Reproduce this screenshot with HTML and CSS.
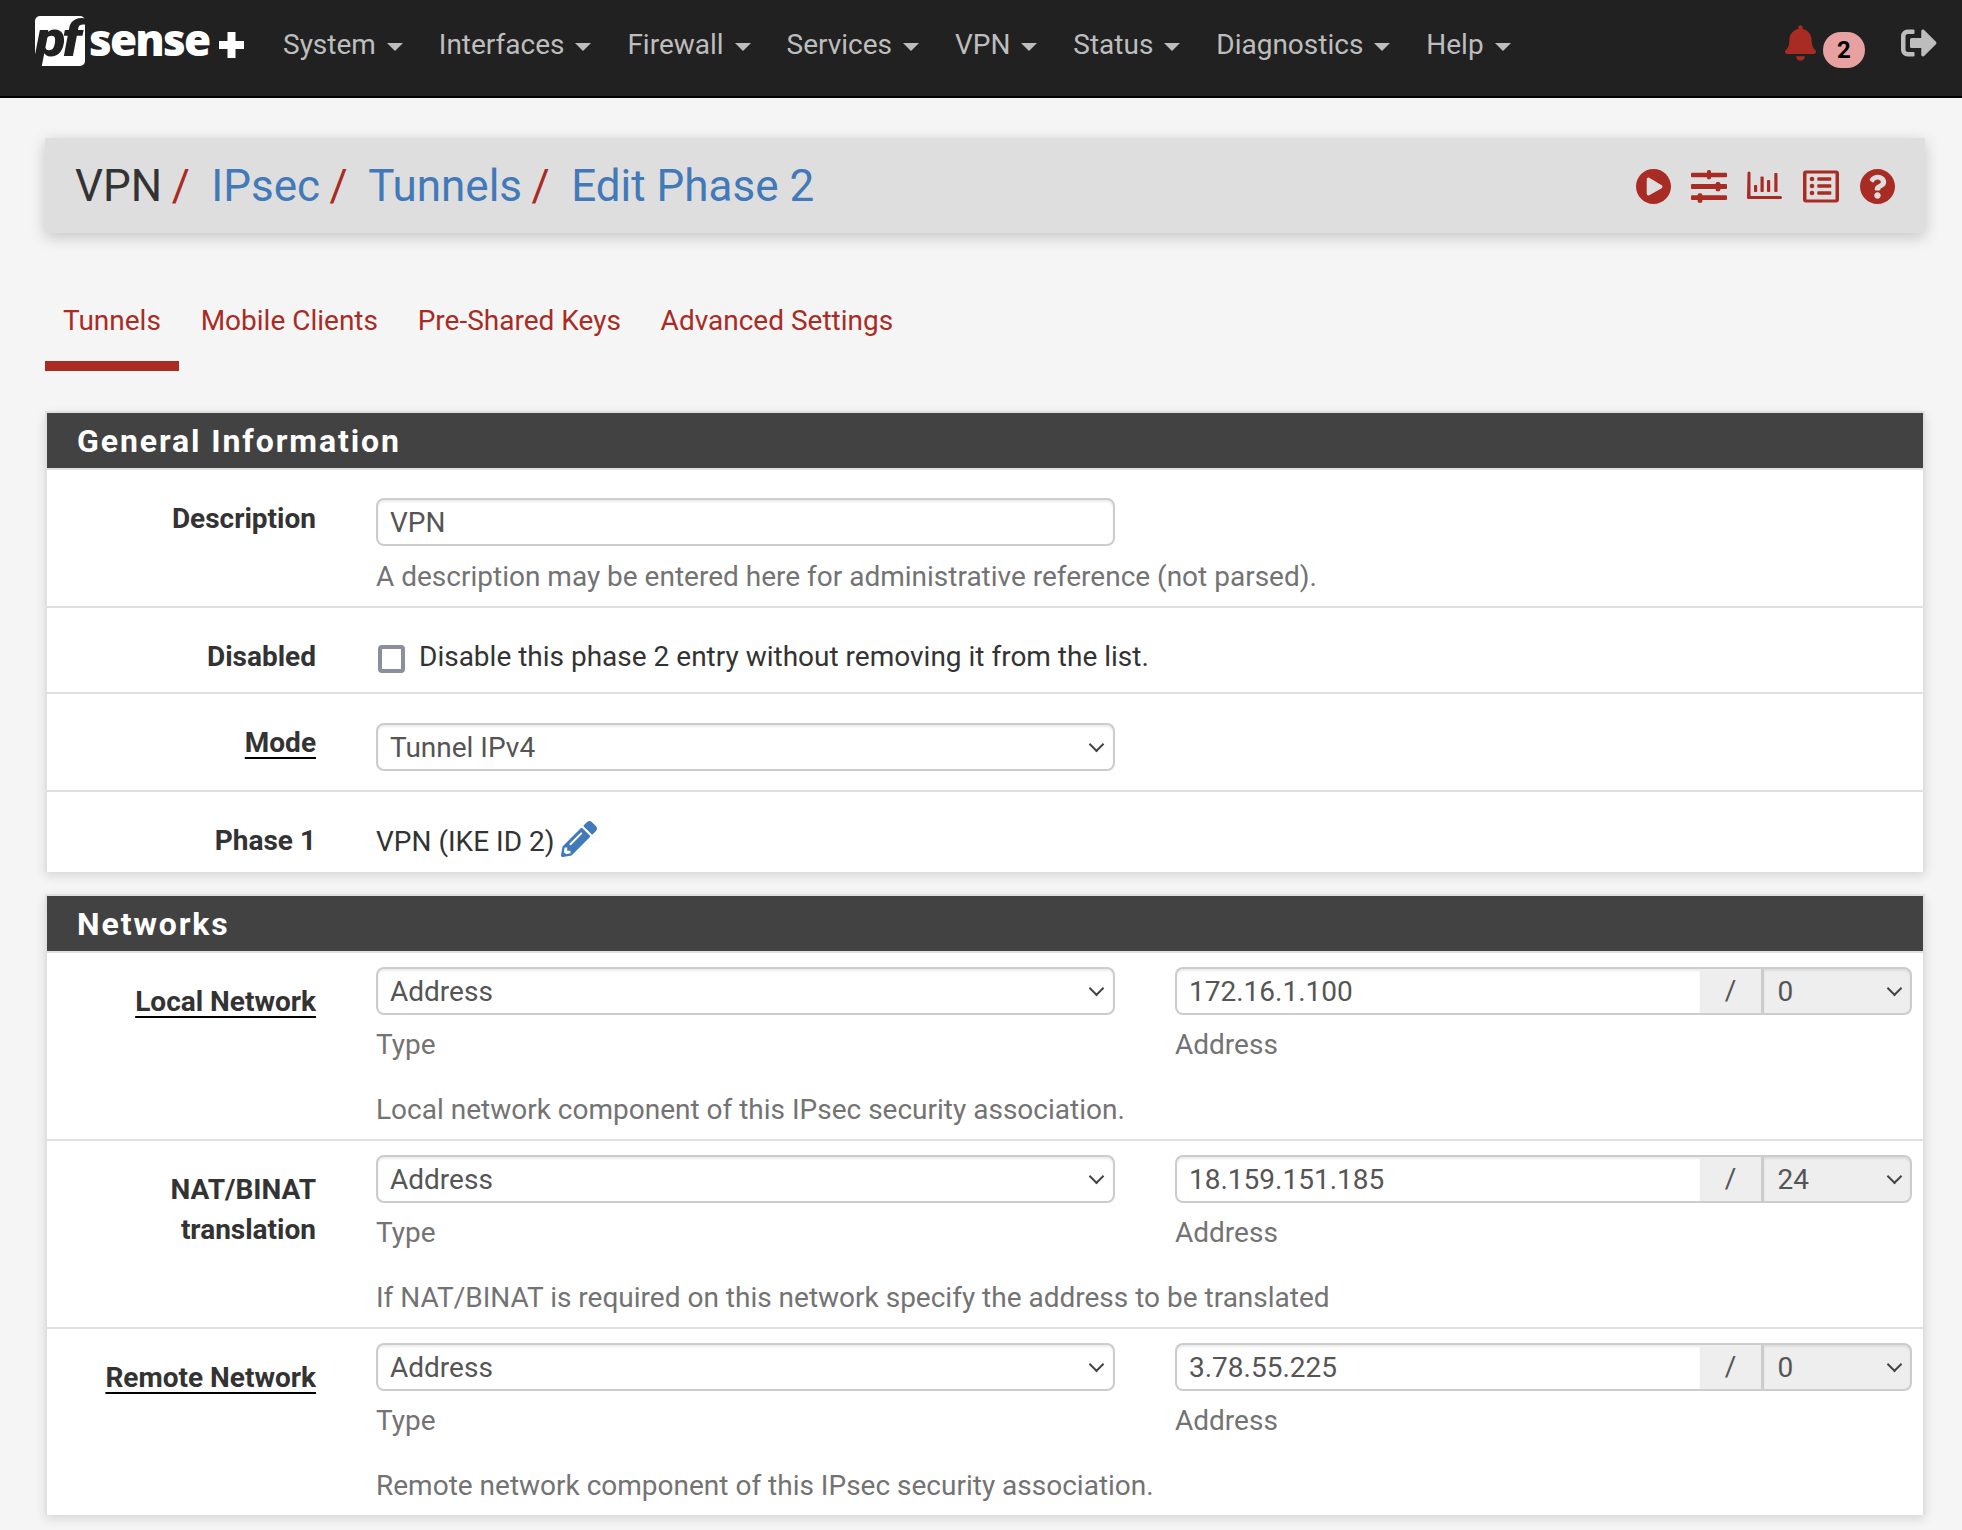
FILE: index.html
```html
<!DOCTYPE html>
<html lang="en">
<head>
<meta charset="utf-8">
<title>VPN / IPsec / Tunnels / Edit Phase 2</title>
<link rel="stylesheet" href="styles.css">
</head>
<body>
<nav class="navbar">
  <a class="logo" href="#" aria-label="pfSense+">
    <span class="logo-box"><span class="logo-pf">pf</span></span>
    <span class="logo-sense">sense</span>
    <svg class="logo-plus" viewBox="0 0 25 26" aria-hidden="true"><path d="M8.500 0h8v9h8.500v8h-8.500v9h-8v-9h-8.500v-8h8.500z"/></svg>
  </a>
  <ul class="menu">
    <li class="menu-item">System</li>
    <li class="menu-item">Interfaces</li>
    <li class="menu-item">Firewall</li>
    <li class="menu-item">Services</li>
    <li class="menu-item">VPN</li>
    <li class="menu-item">Status</li>
    <li class="menu-item">Diagnostics</li>
    <li class="menu-item">Help</li>
  </ul>
  <div class="nav-right">
    <svg class="bell" viewBox="0 0 448 512" aria-hidden="true"><path d="M224 512c35.320 0 63.970-28.650 63.970-64H160.030c0 35.350 28.650 64 63.970 64zm215.390-149.710c-19.320-20.760-55.470-51.990-55.470-154.290 0-77.700-54.480-139.900-127.940-155.160V32c0-17.670-14.320-32-31.980-32s-31.980 14.330-31.980 32v20.840C118.560 68.100 64.080 130.300 64.080 208c0 102.300-36.150 133.530-55.470 154.290-6 6.450-8.660 14.160-8.610 21.710.11 16.400 12.980 32 32.100 32h383.800c19.120 0 32-15.600 32.100-32 .05-7.550-2.610-15.270-8.610-21.710z"/></svg>
    <span class="badge">2</span>
    <svg class="logout" viewBox="0 0 512 512" aria-hidden="true"><path d="M497 273L329 441c-15 15-41 4.500-41-17v-96H152c-13.300 0-24-10.700-24-24v-96c0-13.300 10.700-24 24-24h136V88c0-21.400 25.900-32 41-17l168 168c9.300 9.400 9.300 24.600 0 34zM192 436v-40c0-6.600-5.400-12-12-12H96c-17.700 0-32-14.300-32-32V160c0-17.700 14.300-32 32-32h84c6.600 0 12-5.400 12-12V76c0-6.600-5.400-12-12-12H96c-53 0-96 43-96 96v192c0 53 43 96 96 96h84c6.600 0 12-5.400 12-12z"/></svg>
  </div>
</nav>

<main class="page">
  <header class="crumbs">
    <h1 class="crumb-list">
      <span>VPN</span><span class="sep">/</span>
      <a href="#">IPsec</a><span class="sep">/</span>
      <a href="#">Tunnels</a><span class="sep">/</span>
      <a href="#">Edit Phase 2</a>
    </h1>
    <div class="crumb-icons">
      <svg class="icon-35" viewBox="8 8 496 496" aria-hidden="true"><path d="M256 8C119 8 8 119 8 256s111 248 248 248 248-111 248-248S393 8 256 8zm115.700 272l-176 101c-15.800 8.800-35.700-2.500-35.700-21V152c0-18.400 19.800-29.800 35.700-21l176 107c16.400 9.200 16.400 32.900 0 42z"/></svg>
      <svg class="icon-36" viewBox="0 0 36 33" aria-hidden="true"><rect x="0" y="2.700" width="36" height="4.600" rx="1"/><rect x="0" y="14" width="36" height="5" rx="1"/><rect x="0" y="25.300" width="36" height="4.700" rx="1"/><rect x="16" y="0" width="4" height="9.300" rx="1.500"/><rect x="24.700" y="12" width="4.600" height="9.300" rx="1.500"/><rect x="6.700" y="23.300" width="4.600" height="9.400" rx="1.500"/></svg>
      <svg class="icon-36" viewBox="0 0 36 33" aria-hidden="true"><path d="M1.500 3a1.500 1.500 0 0 1 3 0v23h30a1.500 1.500 0 0 1 0 3H2a1 1 0 0 1-1-1z" transform="translate(-1 0)"/><rect x="7" y="15" width="3.200" height="7" rx=".8"/><rect x="13.500" y="6.500" width="3.200" height="15.500" rx=".8"/><rect x="20" y="10" width="3.200" height="12" rx=".8"/><rect x="27.300" y="3" width="3.200" height="19" rx=".8"/></svg>
      <svg class="icon-36" viewBox="0 0 36 33" aria-hidden="true"><path fill-rule="evenodd" d="M3 .5h30a3 3 0 0 1 3 3v26a3 3 0 0 1-3 3H3a3 3 0 0 1-3-3v-26a3 3 0 0 1 3-3zm.5 3v26h29v-26z"/><circle cx="9" cy="9" r="2.300"/><circle cx="9" cy="16" r="2.300"/><circle cx="9" cy="23" r="2.300"/><rect x="14.300" y="7.300" width="14" height="3.400" rx=".8"/><rect x="14.300" y="14.300" width="14" height="3.400" rx=".8"/><rect x="14.300" y="21.300" width="14" height="3.400" rx=".8"/></svg>
      <svg class="icon-35 icon-last" viewBox="8 8 496 496" aria-hidden="true"><path d="M504 256c0 136.997-111.043 248-248 248S8 392.997 8 256C8 119.083 119.043 8 256 8s248 111.083 248 248zM262.655 90c-54.497 0-89.255 22.957-116.549 63.758-3.536 5.286-2.353 12.415 2.715 16.258l34.699 26.310c5.205 3.947 12.621 3.008 16.665-2.122 17.864-22.658 30.113-35.797 57.303-35.797 20.429 0 45.698 13.148 45.698 32.958 0 14.976-12.363 22.667-32.534 33.976C247.128 238.528 216 254.941 216 296v4c0 6.627 5.373 12 12 12h56c6.627 0 12-5.373 12-12v-1.333c0-28.462 83.186-29.647 83.186-106.667 0-58.002-60.165-102-116.531-102zM256 338c-25.365 0-46 20.635-46 46 0 25.364 20.635 46 46 46s46-20.636 46-46c0-25.365-20.635-46-46-46z"/></svg>
    </div>
  </header>

  <ul class="tabs">
    <li class="tab tab-active">Tunnels</li>
    <li class="tab">Mobile Clients</li>
    <li class="tab">Pre-Shared Keys</li>
    <li class="tab">Advanced Settings</li>
  </ul>

  <section class="panel">
    <h2 class="panel-title">General Information</h2>
    <div class="row">
      <div class="label">Description</div>
      <div class="value value-desc">
        <input class="control" type="text" value="VPN">
        <div class="help help-desc">A description may be entered here for administrative reference (not parsed).</div>
      </div>
    </div>
    <div class="row">
      <div class="label">Disabled</div>
      <label class="value value-check">
        <input class="checkbox" type="checkbox">
        <span>Disable this phase 2 entry without removing it from the list.</span>
      </label>
    </div>
    <div class="row">
      <div class="label"><span class="label-link">Mode</span></div>
      <div class="value value-mode">
        <div class="select-wrap"><select class="control select"><option>Tunnel IPv4</option></select></div>
      </div>
    </div>
    <div class="row row-last">
      <div class="label">Phase 1</div>
      <div class="value value-phase">
        <span>VPN (IKE ID 2)</span>
        <svg class="pencil" viewBox="0 0 512 512" aria-hidden="true"><path d="M497.900 142.100l-46.100 46.100c-4.700 4.700-12.300 4.700-17 0l-111-111c-4.700-4.700-4.700-12.300 0-17l46.100-46.100c18.700-18.700 49.100-18.700 67.900 0l60.100 60.100c18.800 18.700 18.800 49.100 0 67.900zM284.200 99.800L21.600 362.400.4 483.900c-2.900 16.400 11.400 30.600 27.800 27.800l121.500-21.300 262.600-262.600c4.700-4.700 4.700-12.300 0-17l-111-111c-4.800-4.700-12.400-4.700-17.100 0zM124.100 339.900c-5.500-5.500-5.500-14.300 0-19.800l154-154c5.500-5.500 14.300-5.500 19.800 0s5.500 14.300 0 19.800l-154 154c-5.500 5.500-14.300 5.500-19.800 0zM88 424h48v36.300l-64.500 11.300-31.100-31.100L51.700 376H88v48z"/></svg>
      </div>
    </div>
  </section>

  <section class="panel panel-next">
    <h2 class="panel-title">Networks</h2>

    <div class="row">
      <div class="label"><span class="label-link">Local Network</span></div>
      <div class="value value-net">
        <div class="net-grid">
          <div>
            <div class="select-wrap"><select class="control select"><option>Address</option></select></div>
            <div class="help help-sub">Type</div>
          </div>
          <div>
            <div class="group">
              <input class="control group-input" type="text" value="172.16.1.100">
              <span class="group-addon">/</span>
              <div class="select-wrap group-select-wrap"><select class="control select group-select"><option>0</option></select></div>
            </div>
            <div class="help help-sub">Address</div>
          </div>
        </div>
        <div class="help help-net">Local network component of this IPsec security association.</div>
      </div>
    </div>

    <div class="row">
      <div class="label">NAT/BINAT<br>translation</div>
      <div class="value value-net">
        <div class="net-grid">
          <div>
            <div class="select-wrap"><select class="control select"><option>Address</option></select></div>
            <div class="help help-sub">Type</div>
          </div>
          <div>
            <div class="group">
              <input class="control group-input" type="text" value="18.159.151.185">
              <span class="group-addon">/</span>
              <div class="select-wrap group-select-wrap"><select class="control select group-select"><option>24</option></select></div>
            </div>
            <div class="help help-sub">Address</div>
          </div>
        </div>
        <div class="help help-net">If NAT/BINAT is required on this network specify the address to be translated</div>
      </div>
    </div>

    <div class="row row-last">
      <div class="label"><span class="label-link">Remote Network</span></div>
      <div class="value value-net">
        <div class="net-grid">
          <div>
            <div class="select-wrap"><select class="control select"><option>Address</option></select></div>
            <div class="help help-sub">Type</div>
          </div>
          <div>
            <div class="group">
              <input class="control group-input" type="text" value="3.78.55.225">
              <span class="group-addon">/</span>
              <div class="select-wrap group-select-wrap"><select class="control select group-select"><option>0</option></select></div>
            </div>
            <div class="help help-sub">Address</div>
          </div>
        </div>
        <div class="help help-net">Remote network component of this IPsec security association.</div>
      </div>
    </div>
  </section>
</main>
</body>
</html>
```

FILE: styles.css
```css
* { box-sizing: border-box; }

html, body { margin: 0; padding: 0; }

body {
  background: #f5f5f5;
  color: #333;
  font-family: Roboto, "Liberation Sans", sans-serif;
  font-size: 28px;
  line-height: 40px;
  overflow: hidden;
  height: 1530px;
}

ul { list-style: none; margin: 0; padding: 0; }
a { color: inherit; text-decoration: none; }

/* Navbar */
.navbar {
  display: flex;
  align-items: center;
  height: 98px;
  padding: 0 25px 6px 35px;
  background: #212121;
  border-bottom: 2px solid #000;
}

.logo {
  display: flex;
  align-items: flex-end;
  width: 230px;
  height: 50px;
  margin-bottom: 9px;
}

.logo-box {
  display: block;
  width: 50px;
  height: 50px;
  border-radius: 5px;
  background: #fff;
}

.logo-pf {
  display: block;
  height: 50px;
  margin-top: -2px;
  color: #212121;
  font: italic 900 50px/50px Roboto, "Liberation Sans", sans-serif;
  letter-spacing: -3px;
  transform: scaleX(1.12);
  transform-origin: left center;
}

.logo-sense {
  margin: 0 0 7px 4px;
  color: #fff;
  font: 800 44px/40px "Open Sans", "Liberation Sans", sans-serif;
  letter-spacing: -1.800px;
}

.logo-plus {
  width: 25px;
  height: 26px;
  margin: 0 0 8px 10px;
  fill: #fff;
}

.menu { display: flex; margin-left: 0; }

.menu-item {
  display: flex;
  align-items: center;
  padding: 0 17.900px 0 18px;
  color: #bdbdbd;
}

.menu-item::after {
  content: "";
  width: 0;
  height: 0;
  margin: 4px 0 0 11px;
  border-top: 8px solid #bdbdbd;
  border-left: 8px solid transparent;
  border-right: 8px solid transparent;
}

.nav-right {
  display: flex;
  align-items: center;
  margin-left: auto;
  margin-bottom: 4px;
}

.bell {
  width: 31px;
  height: 36px;
  fill: #a82c24;
}

.badge {
  width: 42px;
  height: 36px;
  margin: 14px 36px 0 7px;
  border-radius: 18px;
  background: #e6a1a0;
  color: #000;
  font-size: 24px;
  font-weight: 700;
  line-height: 36px;
  text-align: center;
}

.logout {
  width: 36px;
  height: 36px;
  fill: #bdbdbd;
}

/* Page */
.page { padding: 40px 37px 0 45px; }

.crumbs {
  display: flex;
  align-items: center;
  justify-content: space-between;
  height: 95px;
  padding: 0 30px;
  border-radius: 2px;
  background: #dedede;
  box-shadow: 0 4px 16px rgba(0, 0, 0, .2);
}

.crumb-list {
  margin: 0;
  color: #333;
  font-size: 44px;
  font-weight: 400;
  line-height: 50px;
  white-space: nowrap;
}

.crumb-list a { color: #4279b8; }

.sep {
  margin: 0 10.500px 0 9.500px;
  color: #a82c24;
}

.crumb-icons {
  display: flex;
  align-items: center;
  gap: 20px;
  padding-top: 2px;
  fill: #a82c24;
}

.icon-35 { width: 35px; height: 35px; }
.icon-36 { width: 36px; height: 33px; }
.icon-last { margin-left: 1px; }

/* Tabs */
.tabs {
  display: flex;
  gap: 3.750px;
  margin-top: 68px;
}

.tab {
  padding: 0 18px 20px;
  border-bottom: 10px solid transparent;
  color: #a82c24;
}

.tab-active { border-bottom-color: #a82c24; }

/* Panels */
.panel {
  margin-top: 40px;
  border: 2px solid #e0e0e0;
  border-bottom: 0;
  background: #fff;
  box-shadow: 0 4px 10px rgba(0, 0, 0, .12);
}

.panel-next { margin-top: 22px; }

.panel-title {
  height: 57px;
  margin: 0;
  padding-left: 30px;
  border-bottom: 2px solid #e0e0e0;
  background: #424242;
  background-clip: padding-box;
  color: #fff;
  font-size: 32px;
  font-weight: 700;
  line-height: 56px;
  letter-spacing: 1.900px;
}

.row {
  display: flex;
  border-bottom: 2px solid #e0e0e0;
}

.row-last { border-bottom: 0; }

.label {
  flex: 0 0 269px;
  padding-top: 29px;
  color: #333;
  font-weight: 700;
  text-align: right;
}

.label-link {
  text-decoration: underline;
  text-decoration-color: #000;
  text-decoration-thickness: 2px;
  text-underline-offset: 5px;
}

.value {
  flex: 1;
  min-width: 0;
  margin-left: 60px;
  padding-right: 11px;
}

.value-desc { padding-top: 28px; padding-bottom: 9px; }

.value-check {
  display: flex;
  align-items: center;
  padding-top: 29px;
  padding-bottom: 15px;
}

.value-mode { padding-top: 29px; padding-bottom: 19px; }

.value-phase {
  display: flex;
  align-items: center;
  padding-top: 30px;
  padding-bottom: 10px;
}

.value-net { padding-top: 14px; padding-bottom: 9px; }

.checkbox {
  appearance: none;
  flex: none;
  width: 27px;
  height: 28px;
  margin: 4px 14px 0 2px;
  border: 4px solid #8c8d9e;
  border-radius: 4px;
  background: #fff;
}

.pencil {
  flex: none;
  width: 36px;
  height: 36px;
  margin: -7px 0 0 7px;
  fill: #4279b8;
}

/* Controls */
.control {
  display: block;
  width: 739px;
  height: 48px;
  margin: 0;
  padding: 0 12px;
  border: 2px solid #ccc;
  border-radius: 8px;
  outline: 0;
  background: #fff;
  box-shadow: inset 0 2px 2px rgba(0, 0, 0, .075);
  color: #555;
  font: 28px/40px Roboto, "Liberation Sans", sans-serif;
}

.select {
  appearance: none;
  padding-top: 2px;
  padding-right: 36px;
}

.select-wrap { position: relative; width: 739px; }

.select-wrap::after {
  content: "";
  position: absolute;
  top: 16px;
  right: 13px;
  width: 9px;
  height: 9px;
  border-right: 2px solid #444;
  border-bottom: 2px solid #444;
  transform: rotate(45deg);
  pointer-events: none;
}

.help { color: #737373; }
.help-desc { margin-top: 11px; }
.help-sub { margin-top: 10px; }
.help-net { margin-top: 25px; }

.net-grid {
  display: grid;
  grid-template-columns: 739px 737px;
  column-gap: 60px;
}

.group {
  display: flex;
  width: 737px;
  height: 48px;
}

.group-input {
  flex: 1;
  width: auto;
  min-width: 0;
  border-right: 0;
  border-radius: 8px 0 0 8px;
}

.group-addon {
  flex: 0 0 61px;
  border-top: 2px solid #ccc;
  border-bottom: 2px solid #ccc;
  background: #eee;
  color: #555;
  line-height: 44px;
  text-align: center;
}

.group-select-wrap { flex: 0 0 151px; width: 151px; }

.group-select {
  width: 151px;
  padding-left: 13.500px;
  border-left-width: 3px;
  border-radius: 0 8px 8px 0;
  background: #eee;
}

.group-select-wrap::after { right: 12px; }
```
